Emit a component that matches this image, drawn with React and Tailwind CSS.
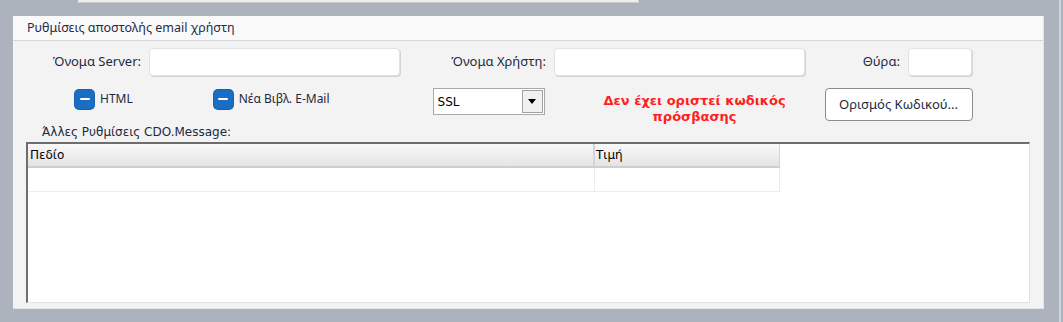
import { useState } from 'react'

const ui = { fontFamily: '"Noto Sans", "Open Sans", sans-serif' }
const grid = { fontFamily: '"DejaVu Sans", "Liberation Sans", sans-serif' }

function TextBox({ className }) {
  return (
    <div
      className={`h-[28px] rounded-[4px] bg-white border border-[#e2e2e2] shadow-[1px_1px_0_#d4d4d4] ${className}`}
    />
  )
}

function Check({ label, x }) {
  return (
    <div className={`flex items-center gap-[6px] ${x}`}>
      <div className="w-[19px] h-[19px] rounded-[4px] bg-[#1a6dc2] flex items-center justify-center shadow-[0_0_0_1px_#1660ad]">
        <div className="w-[10px] h-[2px] bg-white rounded-full" />
      </div>
      <span className="text-[12px] text-[#1c2940]" style={ui}>{label}</span>
    </div>
  )
}

export default function App() {
  const [rows] = useState([{ field: '', value: '' }])

  return (
    <div className="w-[1063px] h-[322px] bg-[#adb3bc] flex overflow-hidden">
      <div className="w-[1059px] flex flex-col">
        <div className="ml-[78px] w-[561px] h-[3px] bg-[#eeeeee] border-b border-r border-[#c9ccd0]" />

        <div className="mt-[13px] ml-[13px] w-[1031px] h-[293px] bg-[#f3f3f3] border-r border-b border-[#e4e4e4] flex flex-col">
          <div className="h-[25px] bg-[#f9f9f9] border-b border-[#d6d6d6] flex items-center pl-[14px]">
            <span className="text-[12.5px] text-[#1e2b4a]" style={ui}>Ρυθμίσεις αποστολής email χρήστη</span>
          </div>

          <div className="flex items-center mt-[7px] h-[28px] text-[13px] text-[#1c2940]" style={ui}>
            <span className="w-[128px] text-right">Όνομα Server:</span>
            <TextBox className="ml-[8px] w-[251px]" />
            <span className="w-[146px] text-right">Όνομα Χρήστη:</span>
            <TextBox className="ml-[8px] w-[251px]" />
            <span className="w-[95px] text-right">Θύρα:</span>
            <TextBox className="ml-[8px] w-[64px]" />
          </div>

          <div className="flex items-start mt-[12px] h-[38px]">
            <div className="flex items-center h-[26px] mt-[-2px]">
              <Check label="HTML" x="ml-[62px]" />
              <Check label="Νέα Βιβλ. E-Mail" x="ml-[81px]" />
            </div>
            <div className="ml-[103px] mt-[0px] w-[112px] h-[27px] border border-[#a9a9a9] bg-white flex items-center p-[1px]">
              <span className="flex-1 pl-[3px] text-[12px] text-black" style={grid}>SSL</span>
              <div className="w-[21px] h-full bg-[#f1f1f1] border border-[#a0a0a0] flex items-center justify-center">
                <div className="w-0 h-0 border-l-[4px] border-r-[4px] border-t-[5px] border-l-transparent border-r-transparent border-t-black" />
              </div>
            </div>
            <div className="ml-[22px] w-[256px] mt-[5px] text-center text-[13px] leading-[16px] font-bold text-[#ff1f1f]" style={grid}>
              Δεν έχει οριστεί κωδικός<br />πρόσβασης
            </div>
            <button
              className="ml-[2px] mt-[0px] w-[148px] h-[33px] rounded-[4px] bg-white border border-[#8c8c8c] text-[13px] text-[#1c2940]"
              style={ui}
            >
              Ορισμός Κωδικού...
            </button>
          </div>

          <div className="ml-[29px] mt-[-2px] h-[16px] flex items-center text-[12px] text-[#1c2940]" style={grid}>
            Άλλες Ρυθμίσεις CDO.Message:
          </div>

          <div className="ml-[13px] mt-[2px] w-[1004px] h-[161px] bg-white border-t-2 border-l-2 border-t-[#6e6e6e] border-l-[#6e6e6e] border-r border-b border-r-[#e2e2e2] border-b-[#e2e2e2]">
            <div className="flex w-[752px] h-[24px] bg-gradient-to-b from-[#f9f9f9] to-[#e4e4e4] border-b-2 border-[#cfcfcf] text-[12px] text-black" style={grid}>
              <div className="w-[567px] pl-[2px] flex items-center border-r-2 border-[#d5d5d5]">Πεδίο</div>
              <div className="flex-1 pl-[1px] flex items-center border-r border-[#d5d5d5]">Τιμή</div>
            </div>
            {rows.map((r, i) => (
              <div key={i} className="flex w-[752px] h-[24px] border-b border-[#ececec]">
                <div className="w-[567px] border-r border-[#ececec]">{r.field}</div>
                <div className="flex-1 border-r border-[#ececec]">{r.value}</div>
              </div>
            ))}
          </div>
        </div>
      </div>
      <div className="w-[2px] h-full bg-[#d3d7dc]" />
      <div className="w-[2px] h-full bg-[#adb3bc]" />
    </div>
  )
}
